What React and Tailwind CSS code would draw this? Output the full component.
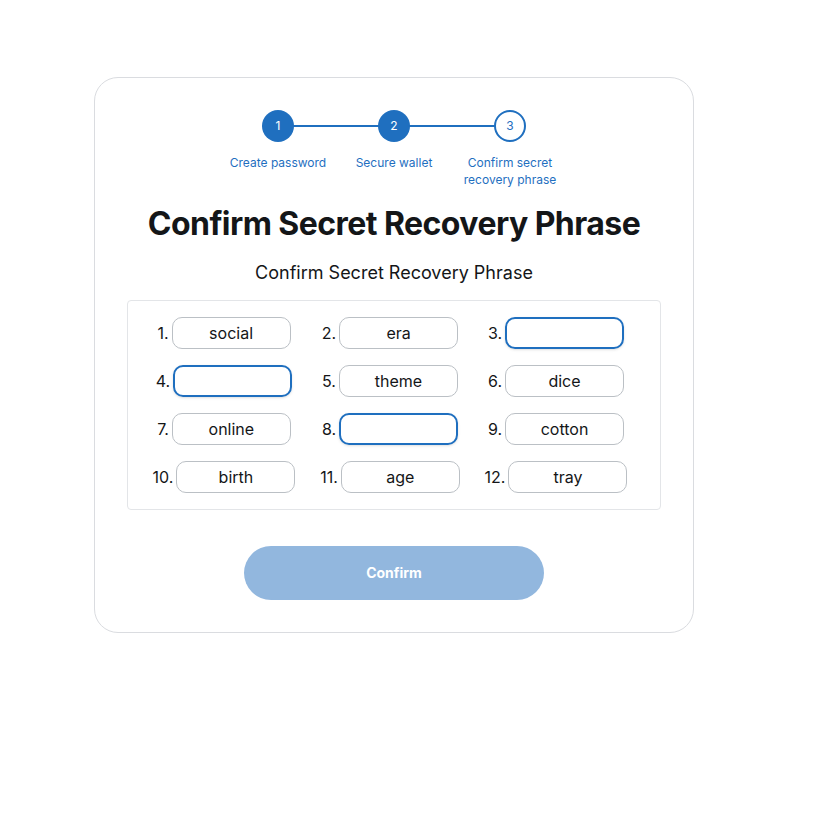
import React from 'react';

const steps = [
  { n: 1, label: 'Create password', done: true },
  { n: 2, label: 'Secure wallet', done: true },
  { n: 3, label: 'Confirm secret recovery phrase', done: false },
];

const words = [
  'social', 'era', '', '', 'theme', 'dice',
  'online', '', 'cotton', 'birth', 'age', 'tray',
];

const Stepper = () => (
  <div className="flex justify-center">
    {steps.map((s, i) => (
      <div key={s.n} className="relative flex w-[116px] flex-col items-center">
        {i < steps.length - 1 && (
          <div className="absolute left-[58px] top-[15px] h-[2px] w-[116px] bg-[#1f6fbf]" />
        )}
        <div
          className={
            s.done
              ? 'relative z-10 flex h-8 w-8 items-center justify-center rounded-full bg-[#1f6fbf] text-xs text-white'
              : 'relative z-10 flex h-8 w-8 items-center justify-center rounded-full border-2 border-[#1f6fbf] bg-white text-xs text-[#1f6fbf]'
          }
        >
          {s.n}
        </div>
        <p className="mt-3 w-[100px] text-center text-xs leading-[17px] text-[#1f6fbf]">{s.label}</p>
      </div>
    ))}
  </div>
);

const WordCell = ({ index, word }) => (
  <div className="flex items-center justify-center">
    <span className="mr-[3px] text-base text-[#141618]">{index}.</span>
    {word ? (
      <div className="flex h-8 w-[119px] items-center justify-center rounded-[10px] border border-[#bbc0c5] text-base text-[#141618]">
        {word}
      </div>
    ) : (
      <div className="h-8 w-[119px] rounded-[10px] border-2 border-[#1f6fbf] shadow-sm" />
    )}
  </div>
);

const App = () => {
  return (
    <div className="min-h-[816px] bg-white pl-[94px] pt-[77px]" style={{ fontFamily: 'Inter, "Noto Sans", sans-serif' }}>
      <div className="w-[600px] rounded-[24px] border border-[#dadce0] px-8 pb-8 pt-8">
        <Stepper />

        <h1 className="mt-[14px] text-center text-[32px] font-bold leading-[44px] tracking-[-0.55px] text-[#141618]">
          Confirm Secret Recovery Phrase
        </h1>
        <p className="mt-[13px] text-center text-lg text-[#141618]">Confirm Secret Recovery Phrase</p>

        <div className="mt-[13px] rounded border border-[#e3e5e8] py-4 pl-[13px]">
          <div className="grid grid-cols-[repeat(3,166px)] gap-y-4">
            {words.map((w, i) => (
              <WordCell key={i} index={i + 1} word={w} />
            ))}
          </div>
        </div>

        <div className="mt-[36px] flex justify-center">
          <button className="h-[54px] w-[300px] rounded-full bg-[#92b7de] text-sm font-bold text-white">
            Confirm
          </button>
        </div>
      </div>
    </div>
  );
};

export default App;
